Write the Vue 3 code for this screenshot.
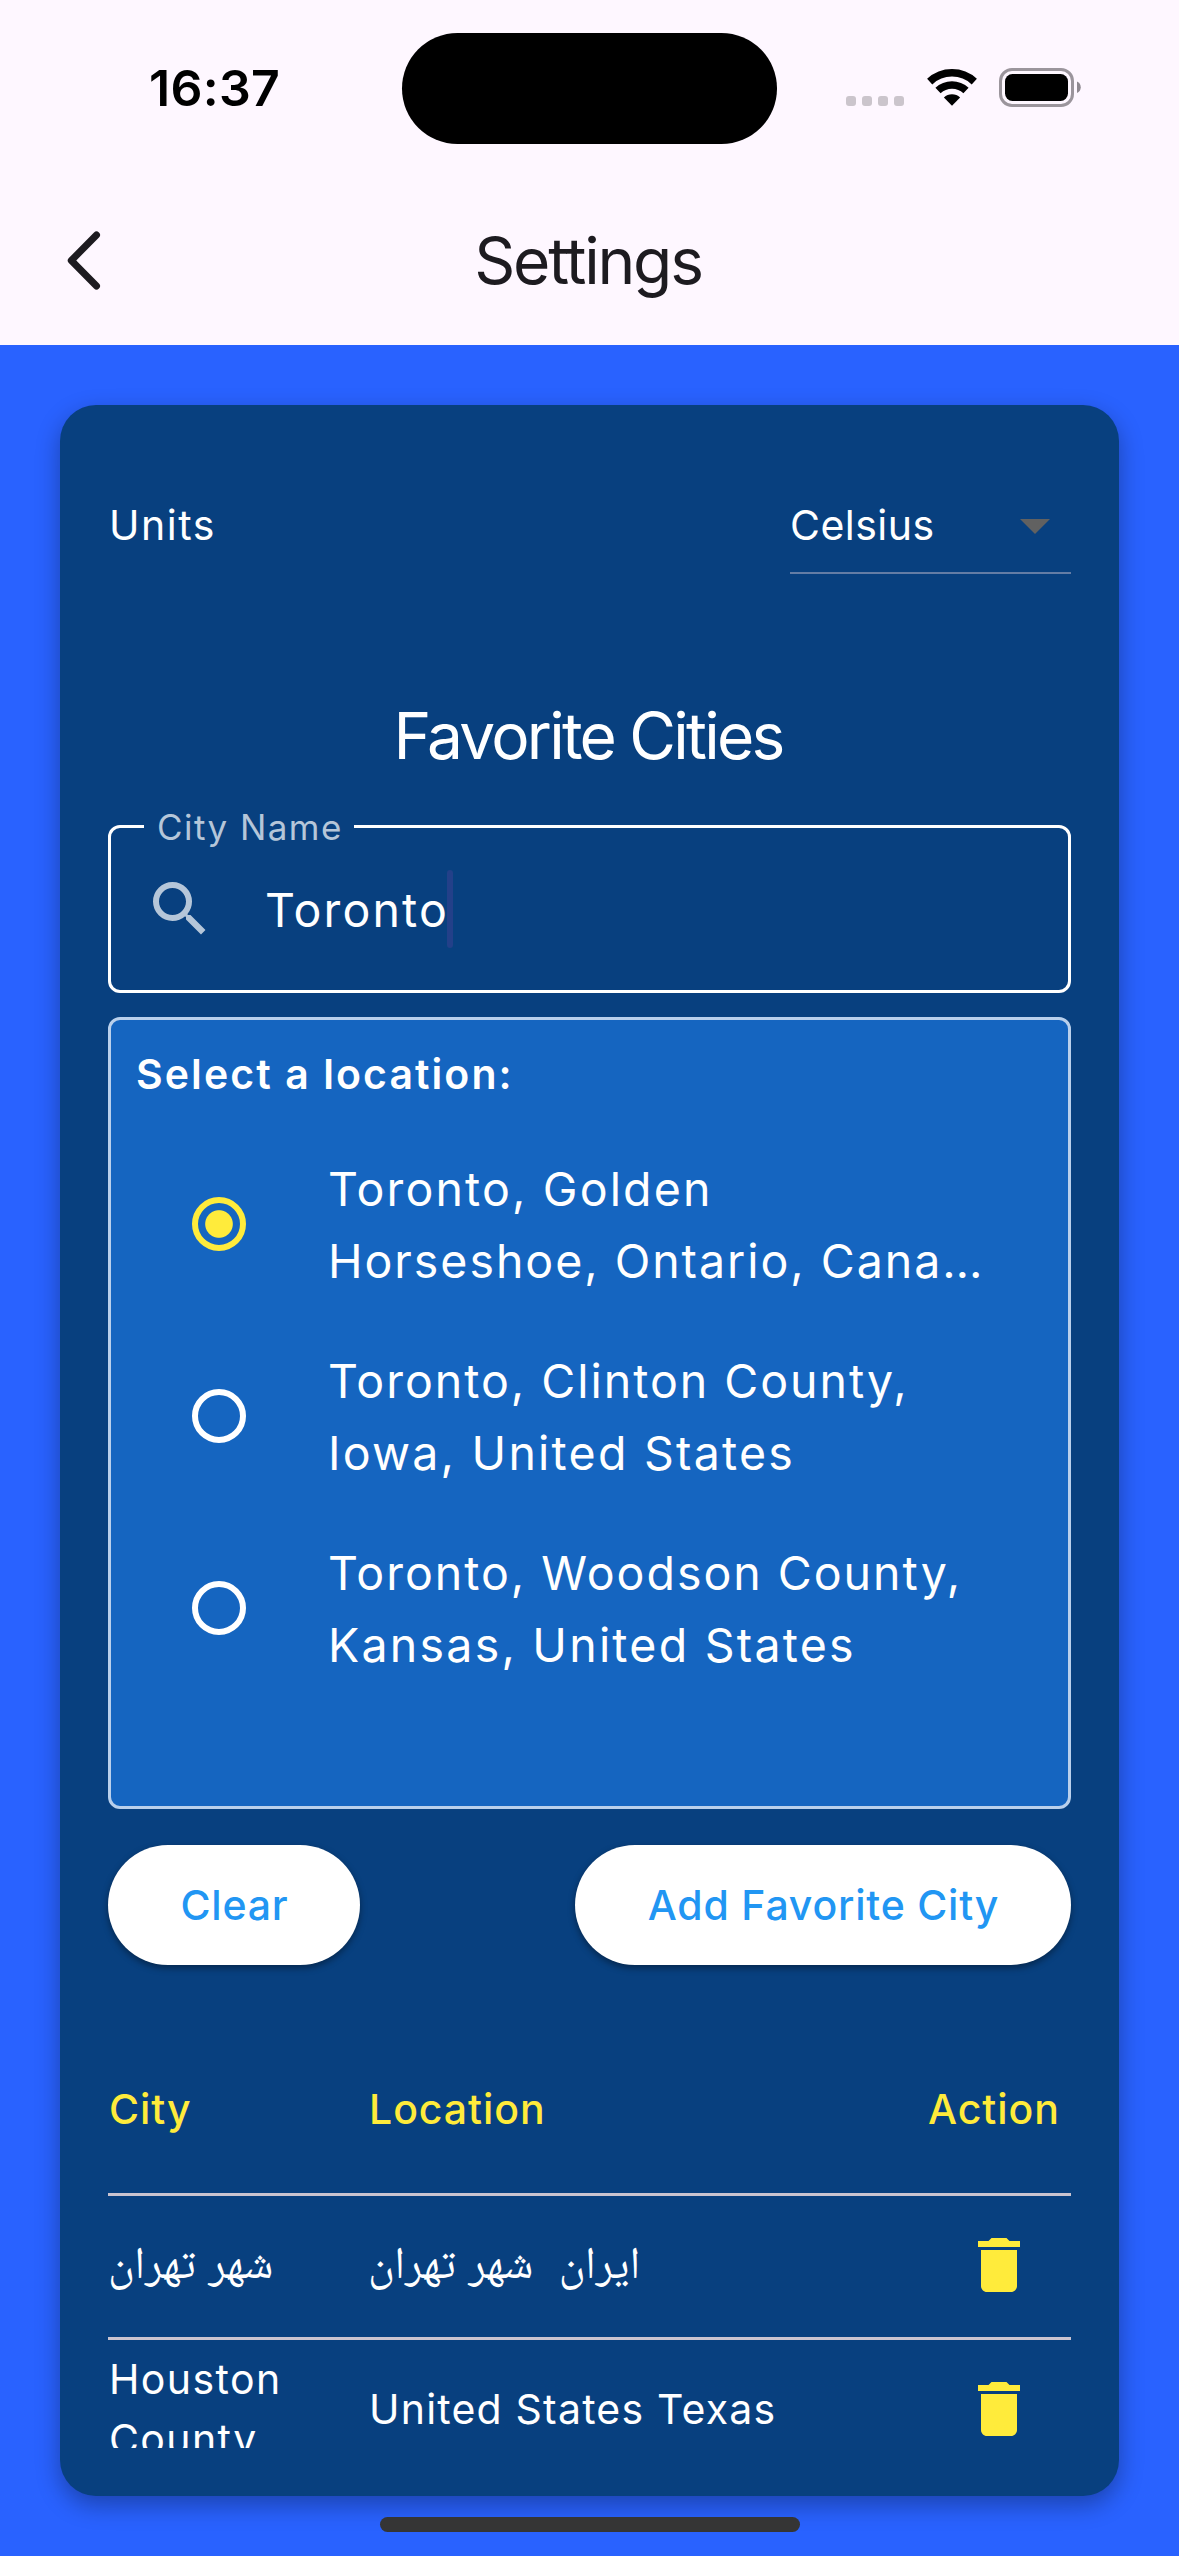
<script setup>
const locations = [
  { lines: ['Toronto, Golden', 'Horseshoe, Ontario, Cana…'], selected: true },
  { lines: ['Toronto, Clinton County,', 'Iowa, United States'], selected: false },
  { lines: ['Toronto, Woodson County,', 'Kansas, United States'], selected: false },
]
const cities = [
  { city: 'شهر تهران', location: 'ایران\u00a0 شهر تهران', rtl: true },
  { city: 'Houston County', location: 'United States Texas', rtl: false },
]
</script>

<template>
  <div class="screen">
    <header class="top">
      <div class="status">
        <span class="time">16:37</span>
        <span class="island"></span>
        <div class="indicators">
          <span class="dots"><i></i><i></i><i></i><i></i></span>
          <svg class="wifi" width="50" height="37" viewBox="0 0 50 37">
            <path d="M2.7 12.6A32.7 32.7 0 0 1 47.3 12.6M11 21.5A20.5 20.5 0 0 1 39 21.5" fill="none" stroke="#000" stroke-width="7.6" />
            <path d="M25 36.8L16.9 28.4A12 12 0 0 1 33.1 28.4Z" />
          </svg>
          <svg width="82" height="39" viewBox="0 0 82 39">
            <rect x="1.5" y="1.5" width="72" height="36" rx="11.5" fill="none" stroke="#9b959c" stroke-width="3" />
            <rect x="6" y="6" width="63" height="27" rx="7.5" />
            <path d="M78 13.5C83 15.5 83 23 78 25Z" fill="#8f8990" />
          </svg>
        </div>
      </div>
      <nav class="appbar">
        <svg class="back" width="40" height="64" viewBox="0 0 40 64">
          <path d="M32.500 6L7.300 31.500L32.500 57" fill="none" stroke="#1d1b20" stroke-width="7" stroke-linecap="round" stroke-linejoin="round" />
        </svg>
        <h1>Settings</h1>
      </nav>
    </header>

    <main class="body">
      <section class="card">
        <div class="units">
          <span class="units-label">Units</span>
          <div class="select">
            <span>Celsius</span>
            <svg width="30" height="15" viewBox="0 0 30 15"><path d="M0 0H30L15 15Z" fill="#616161" /></svg>
          </div>
        </div>

        <h2>Favorite Cities</h2>

        <div class="field">
          <span class="field-label">City Name</span>
          <svg class="search" width="72" height="72" viewBox="0 0 24 24" fill="#b5c6d9">
            <path d="M15.5 14h-.79l-.28-.27A6.471 6.471 0 0 0 16 9.500 6.500 6.500 0 1 0 9.500 16c1.610 0 3.090-.59 4.230-1.570l.27.28v.79l5 4.990L20.490 19l-4.990-5zm-6 0C7.010 14 5 11.990 5 9.500S7.010 5 9.500 5 14 7.010 14 9.500 11.990 14 9.500 14z" />
          </svg>
          <span class="value">Toronto</span>
          <span class="caret"></span>
        </div>

        <div class="results">
          <div class="results-title">Select a location:</div>
          <div v-for="(item, i) in locations" :key="i" class="option">
            <span class="radio" :class="{ on: item.selected }"></span>
            <div class="option-text">
              <div v-for="line in item.lines" :key="line">{{ line }}</div>
            </div>
          </div>
        </div>

        <div class="buttons">
          <button class="clear">Clear</button>
          <button class="add">Add Favorite City</button>
        </div>

        <div class="table">
          <div class="row head">
            <span class="c1">City</span>
            <span class="c2">Location</span>
            <span class="c3">Action</span>
          </div>
          <div v-for="row in cities" :key="row.location" class="row data" :class="{ rtl: row.rtl }">
            <span class="c1" :dir="row.rtl ? 'rtl' : 'ltr'">{{ row.city }}</span>
            <span class="c2" :dir="row.rtl ? 'rtl' : 'ltr'">{{ row.location }}</span>
            <svg class="trash" width="72" height="72" viewBox="0 0 24 24" fill="#ffeb3b">
              <path d="M6 19c0 1.100.9 2 2 2h8c1.100 0 2-.9 2-2V7H6v12zM19 4h-3.500l-1-1h-5l-1 1H5v2h14V4z" />
            </svg>
          </div>
        </div>
      </section>
      <div class="home"></div>
    </main>
  </div>
</template>

<style>
body { margin: 0; }
</style>

<style scoped>
* { box-sizing: border-box; }
.screen {
  width: 1179px;
  height: 2556px;
  overflow: hidden;
  display: flex;
  flex-direction: column;
  background: #2962ff;
  color: #fff;
  font-family: Inter, "Noto Naskh Arabic", "DejaVu Sans", sans-serif;
}
.top { height: 345px; background: #fef7ff; color: #000; }
.status {
  height: 177px;
  display: grid;
  grid-template-columns: 402px 375px 402px;
}
.time {
  padding-left: 149px;
  line-height: 176px;
  font-size: 50px;
  font-weight: 600;
  letter-spacing: 0.300px;
}
.island { margin-top: 33px; height: 111px; border-radius: 56px; background: #000; }
.indicators { display: flex; align-items: center; height: 175px; padding-left: 69px; }
.dots { display: flex; gap: 6px; margin-top: 27px; }
.dots i { width: 10px; height: 10px; border-radius: 3px; background: #cbc5cc; }
.wifi { margin: 0 22.500px; }
.appbar {
  height: 168px;
  display: grid;
  grid-template-columns: 240px 1fr 240px;
  align-items: center;
}
.back { margin-left: 64px; }
h1, h2 { margin: 0; font-size: 64px; font-weight: 400; text-align: center; }
h1 { color: #1d1b20; letter-spacing: -2.180px; line-height: 84px; padding-right: 3px; }
h2 { letter-spacing: -2.750px; line-height: 84px; margin: 97px 0 47px; padding-right: 3px; }
.body { flex: 1; padding: 60px 60px 0; }
.card {
  height: 2091px;
  padding: 48px;
  border-radius: 36px;
  background: #08407f;
  box-shadow: 0 9px 24px rgba(0, 0, 0, 0.32);
  display: flex;
  flex-direction: column;
}
.units {
  flex: none;
  height: 144px;
  padding-top: 24px;
  display: flex;
  justify-content: space-between;
  font-size: 41px;
}
.units-label { padding-left: 1px; line-height: 96px; letter-spacing: 1.500px; }
.select {
  width: 281px;
  height: 97px;
  display: flex;
  align-items: center;
  justify-content: space-between;
  padding-right: 21px;
  border-bottom: 2px solid #647da5;
  letter-spacing: 0.480px;
}
.select svg { margin-top: 3px; }
.field {
  flex: none;
  position: relative;
  height: 168px;
  border: 3px solid #fff;
  border-radius: 12px;
  display: flex;
  align-items: center;
  padding-left: 33px;
}
.field-label {
  position: absolute;
  left: 33px;
  top: -23px;
  width: 210px;
  padding-left: 13px;
  line-height: 44px;
  font-size: 35px;
  letter-spacing: 1.450px;
  color: #b5c6d9;
  background: #08407f;
}
.value { margin-left: 49px; font-size: 46.500px; letter-spacing: 2.150px; line-height: 72px; padding-top: 2px; }
.caret { width: 6px; height: 78px; margin-left: -2px; border-radius: 3px; background: #234089; }
.results {
  flex: none;
  margin-top: 24px;
  height: 792px;
  border: 3px solid #b9d0ec;
  border-radius: 12px;
  background: #1565c0;
  padding: 24px;
}
.results-title {
  line-height: 60px;
  font-size: 41px;
  font-weight: 600;
  letter-spacing: 2.080px;
  margin-bottom: 24px;
  padding-left: 1px;
}
.option { height: 192px; display: flex; align-items: center; padding-left: 57px; }
.radio { width: 54px; height: 54px; border: 6px solid #fff; border-radius: 50%; }
.radio.on {
  border-color: #ffeb3b;
  background: radial-gradient(circle, #ffeb3b 13.300px, transparent 14.300px);
}
.option-text {
  margin-left: 82px;
  padding-top: 2px;
  font-size: 46.500px;
  line-height: 72px;
  letter-spacing: 1.980px;
  white-space: nowrap;
}
.option-text div:nth-child(2) { letter-spacing: 2.230px; }
.option:nth-child(2) .option-text div:nth-child(1) { letter-spacing: 2.150px; }
.option:nth-child(2) .option-text div:nth-child(2) { letter-spacing: 1.960px; }
.buttons { flex: none; margin-top: 36px; display: flex; justify-content: space-between; }
button {
  height: 120px;
  padding: 0 0 0 1px;
  border: 0;
  border-radius: 60px;
  background: #fff;
  color: #2196f3;
  font: 500 41px/120px Inter, sans-serif;
  letter-spacing: 0.800px;
  box-shadow: 0 3px 7px rgba(0, 0, 0, 0.4);
}
.clear { width: 252px; }
.add { width: 496px; }
.table { flex: 1; min-height: 0; margin-top: 60px; overflow: hidden; font-size: 41px; }
.row {
  display: grid;
  grid-template-columns: 260px 560px 143px;
  align-items: center;
  border-bottom: 3px solid #cac4d0;
}
.head {
  height: 171px;
  color: #ffeb3b;
  font-weight: 500;
  letter-spacing: 0.950px;
}
.data { height: 144px; padding-bottom: 3px; line-height: 60px; letter-spacing: 1.200px; }
.c1, .c2 { padding-left: 1px; }
.data .c1 { width: 190px; letter-spacing: 1.400px; }
.data.rtl span { width: auto; padding: 0 0 6px; font-size: 45px; letter-spacing: 0; justify-self: start; white-space: nowrap; }
.trash { margin-left: 35px; }
.home { width: 420px; height: 15px; margin: 21px auto 0; border-radius: 8px; background: #353535; }
</style>
